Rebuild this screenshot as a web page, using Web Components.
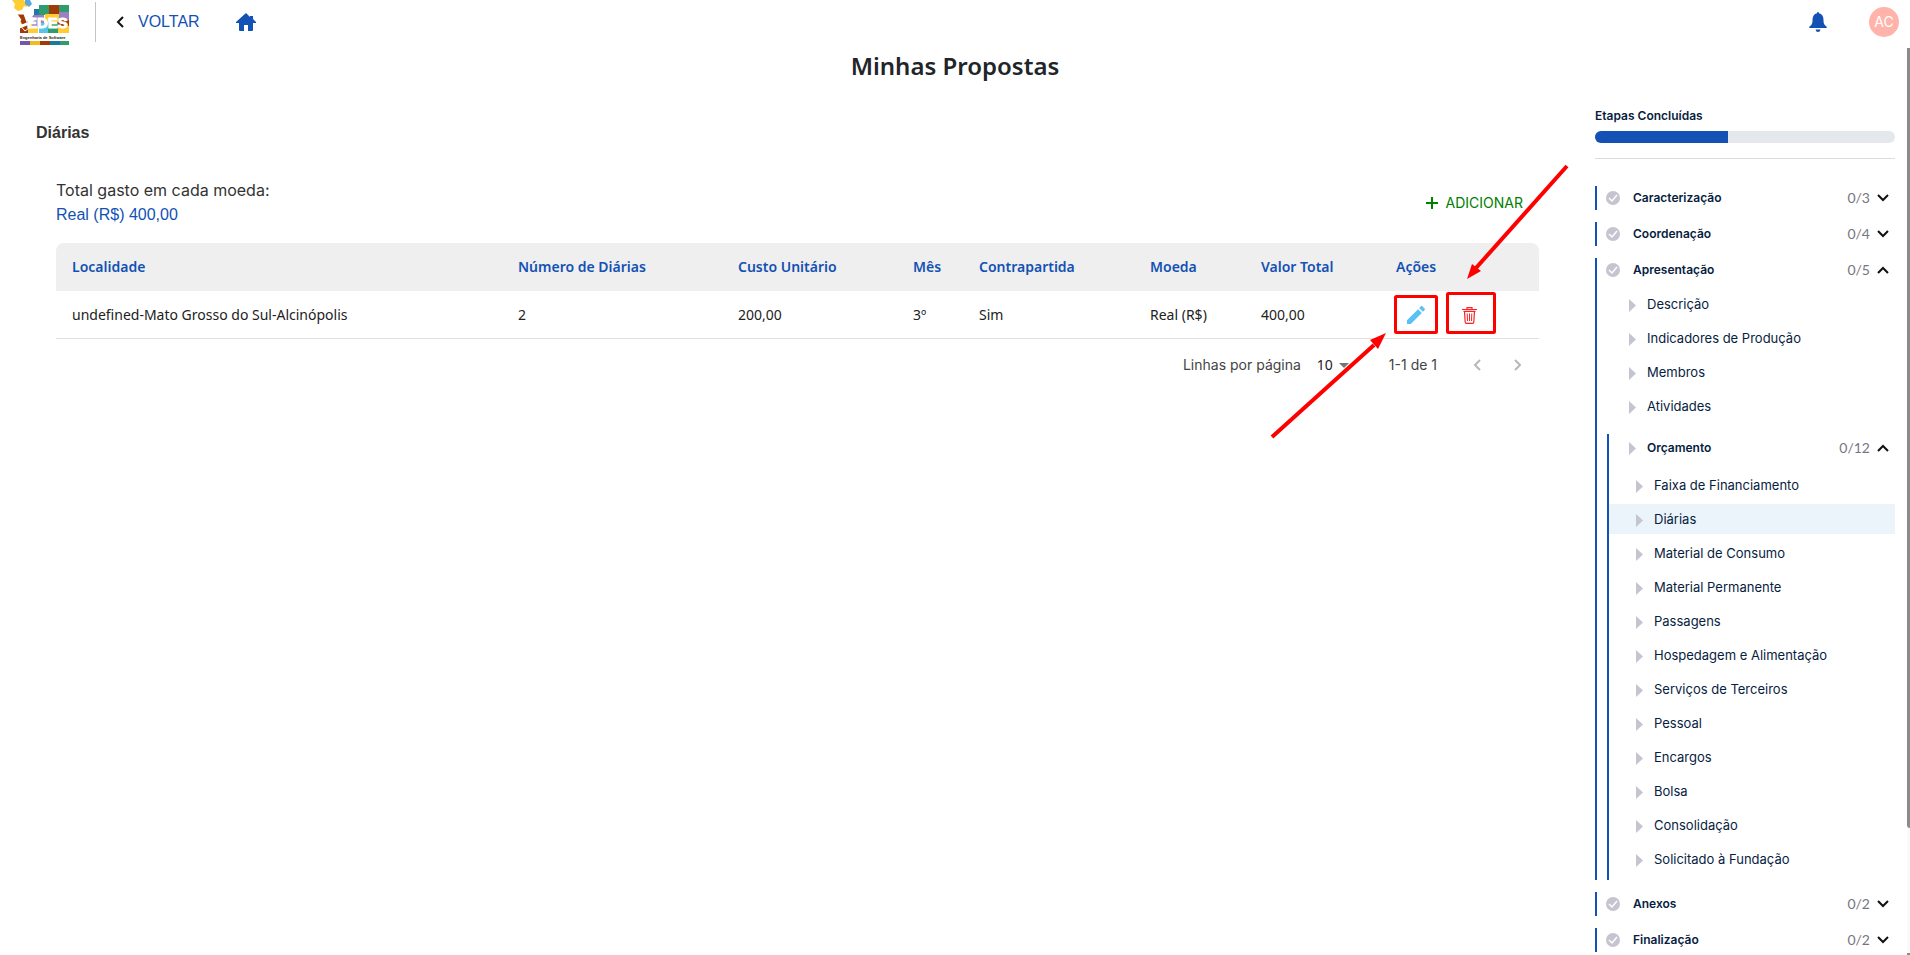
<!DOCTYPE html>
<html lang="pt-BR">
<head>
<meta charset="utf-8">
<meta name="viewport" content="width=device-width, initial-scale=1">
<title>Minhas Propostas</title>
<style>
  body { margin: 0; background: #fff; color: #212529; font-family: Inter, "Liberation Sans", sans-serif; font-size: 16px; line-height: 24px; }
</style>
</head>
<body>
<proposal-page>
  <app-header slot="header"></app-header>
  <expense-section slot="content" heading="Diárias">
    <expense-table></expense-table>
    <table-pager></table-pager>
    <guide-marks slot="overlay"></guide-marks>
  </expense-section>
  <steps-progress slot="steps"></steps-progress>
  <step-group slot="steps" label="Caracterização" count="0/3"></step-group>
  <step-group slot="steps" label="Coordenação" count="0/4"></step-group>
  <step-group slot="steps" label="Apresentação" count="0/5" open>
    <step-item>Descrição</step-item>
    <step-item>Indicadores de Produção</step-item>
    <step-item>Membros</step-item>
    <step-item>Atividades</step-item>
    <step-group label="Orçamento" count="0/12" open nested>
      <step-item deep>Faixa de Financiamento</step-item>
      <step-item deep current>Diárias</step-item>
      <step-item deep>Material de Consumo</step-item>
      <step-item deep>Material Permanente</step-item>
      <step-item deep>Passagens</step-item>
      <step-item deep>Hospedagem e Alimentação</step-item>
      <step-item deep>Serviços de Terceiros</step-item>
      <step-item deep>Pessoal</step-item>
      <step-item deep>Encargos</step-item>
      <step-item deep>Bolsa</step-item>
      <step-item deep>Consolidação</step-item>
      <step-item deep>Solicitado à Fundação</step-item>
    </step-group>
  </step-group>
  <step-group slot="steps" label="Anexos" count="0/2"></step-group>
  <step-group slot="steps" label="Finalização" count="0/2"></step-group>
</proposal-page>

<script>
const define = (name, render) => customElements.define(name, class extends HTMLElement {
  connectedCallback() {
    if (this.shadowRoot) return;
    const t = document.createElement('template');
    t.innerHTML = render(this);
    this.attachShadow({ mode: 'open' }).append(t.content.cloneNode(true));
  }
});

define('proposal-page', () => `
  <style>
    :host { display: block; position: relative; min-height: 100vh; }
    h1 { margin: 0; font: 600 24px/36px "Noto Sans", sans-serif; text-align: center; }
    .columns { display: grid; grid-template-columns: minmax(0, 1fr) 300px; padding-right: 15px; }
    aside { display: flex; flex-direction: column; gap: 12px; padding: 20px 0 3px; }
    .scroll { position: absolute; top: 48px; bottom: 0; right: 0; width: 3px; background: #fafafa; display: flex; flex-direction: column; justify-content: space-between; }
    .scroll::before { content: ""; height: 86%; background: #8b8b8b; border-bottom-left-radius: 3px; }
    .scroll::after { content: ""; height: 2px; background: #8b8b8b; }
  </style>
  <slot name="header"></slot>
  <h1>Minhas Propostas</h1>
  <div class="columns">
    <main><slot name="content"></slot></main>
    <aside aria-label="Etapas"><slot name="steps"></slot></aside>
  </div>
  <div class="scroll"></div>`);

define('ledes-logo', () => `
  <style>
    :host { display: block; width: 57px; height: 45px; }
    svg { display: block; }
    text { font-family: "Liberation Sans", sans-serif; font-weight: 700; }
    .word { font-size: 15px; fill: #fff; stroke: #fff; stroke-width: 1px; }
    .sub { font-size: 4px; fill: #222; }
  </style>
  <svg width="57" height="45" viewBox="0 0 57 45" role="img" aria-label="LEDES Engenharia de Software">
    <path fill="#fc3" d="M0 0h12l1 2 2 1v4l-3-1-2 4-4 1-4-3 1-4z"/>
    <path fill="#5aa7dc" d="M13 0h5l2 4-3 3-4-3z"/>
    <path fill="#2f9c6c" d="M27 5h10v10H27z"/><path fill="#a23a08" d="M37 5h10v10H37z"/><path fill="#2f9c6c" d="M47 5h10v9H47z"/>
    <path fill="#27a" d="M22 9h5v10h-5z"/><path fill="#9a80c0" d="M47 12h10v9H47z"/><path fill="#fc3" d="M33 14h14v8H33z"/>
    <path fill="#9b3a0c" d="M8 21h12v12H8z"/><path fill="#fc3" d="M16 21h10v12H16z"/><path fill="#9a80c0" d="M20 15h12v12H20z"/>
    <path fill="#58c4e4" d="M27 23h11v10H27z"/><path fill="#2f9c6c" d="M36 22h11v11H36z"/><path fill="#a23a08" d="M46 20h11v6H46z"/><path fill="#fc3" d="M46 26h11v7H46z"/>
    <path fill="#a23a08" stroke="#fff" d="M5 14l4 6-4 2 8 9 4-3-5-14z"/>
    <path fill="#fff" d="M11 9l4-2 1 4 4-2 2 5-2 3 4 2-6 5-4-5z"/>
    <text class="word" x="7" y="27" transform="rotate(-22 10 27)">L</text>
    <text class="word" x="15" y="28">EDES</text>
    <path fill="#fff" d="M8 33h49v8H8z"/>
    <text class="sub" x="8" y="39">Engenharia de Software</text>
    <path fill="#7558a5" d="M8 41h10v4H8z"/><path fill="#f5b921" d="M18 41h10v4H18z"/><path fill="#a23a08" d="M28 41h10v4H28z"/><path fill="#187a9c" d="M38 41h10v4H38z"/><path fill="#2f9c6c" d="M48 41h9v4h-9z"/>
  </svg>`);

define('app-header', () => `
  <style>
    :host { display: flex; align-items: center; justify-content: space-between; height: 44px; padding: 0 11px 4px 12px; }
    nav, .user { display: flex; align-items: center; }
    .divider { width: 1px; height: 40px; margin: 0 20px 0 26px; background: #c4c4c4; }
    a { color: #1351b4; text-decoration: none; display: flex; align-items: center; }
    .back { gap: 13px; font: 16px/24px "Liberation Sans", sans-serif; }
    .home { margin-left: 35px; }
    button { border: 0; padding: 0; background: none; display: flex; align-items: center; justify-content: center; }
    .user { gap: 42px; }
    .avatar { width: 30px; height: 30px; border-radius: 50%; background: #ffb3ab; color: #fff; font: 14px/30px Inter, sans-serif; }
  </style>
  <nav>
    <ledes-logo></ledes-logo><span class="divider"></span>
    <a class="back" href="#voltar"><svg width="9" height="12" viewBox="0 0 9 12" fill="none" stroke="#111" stroke-width="2"><path d="M7 1 2 6l5 5"/></svg>VOLTAR</a>
    <a class="home" href="#inicio" aria-label="Início"><svg width="22" height="20" viewBox="0 0 22 20" fill="#1351b4"><path d="M11 1 1 10v1h3v7q0 1 1 1h4v-6h4v6h4q1 0 1-1v-7h3v-1l-3-3V4h-3v1z"/></svg></a>
  </nav>
  <div class="user">
    <button aria-label="Notificações"><svg width="18" height="20" viewBox="0 0 18 20" fill="#1351b4"><path d="M9 0q1 0 1 1.300Q14.500 2.500 14.500 8c0 4 1 5 3 6.500.700.800.500 1.500-.500 1.500H1C0 16-.200 15.300.500 14.500 2.500 13 3.500 12 3.500 8Q3.500 2.500 8 1.300 8 0 9 0zM6.500 17.500h5Q11 20 9 20t-2.500-2.500z"/></svg></button>
    <button class="avatar">AC</button>
  </div>`);

define('expense-section', el => `
  <style>
    :host { display: block; padding: 37px 56px 0; }
    h2 { margin: 0 0 33px -20px; font: 700 16px/24px "Liberation Sans", sans-serif; color: #333; }
    .body { position: relative; }
    .top { display: flex; justify-content: space-between; align-items: center; margin-bottom: 16px; }
    .sum { display: grid; gap: 1px; }
    p { margin: 0; color: #333; }
    p.money { font-family: "Liberation Sans", sans-serif; color: #1351b4; }
    button { display: flex; align-items: center; gap: 8px; border: 0; background: none; padding: 0 16px; font: 14px/24px Inter, sans-serif; color: #008000; }
  </style>
  <h2>${el.getAttribute('heading')}</h2>
  <div class="body">
    <div class="top">
      <div class="sum"><p>Total gasto em cada moeda:</p><p class="money">Real (R$) 400,00</p></div>
      <button><svg width="12" height="12" viewBox="0 0 12 12" stroke="#008000" stroke-width="2"><path d="M6 0v12M0 6h12"/></svg>ADICIONAR</button>
    </div>
    <slot></slot>
    <slot name="overlay"></slot>
  </div>`);

define('expense-table', () => `
  <style>
    :host { display: block; }
    table { width: 100%; table-layout: fixed; border-collapse: separate; border-spacing: 0; font: 14px/24px "Noto Sans", sans-serif; color: #222; }
    th, td { height: 24px; padding: 12px 16px; text-align: left; white-space: nowrap; }
    th { background: #efefef; color: #1351b4; font-weight: 600; }
    th:first-child { border-top-left-radius: 8px; }
    th:last-child { border-top-right-radius: 8px; }
    td { padding-bottom: 11px; border-bottom: 1px solid #e0e0e0; }
    .num { width: 188px; } .cost { width: 143px; } .month { width: 34px; } .match { width: 139px; }
    .coin { width: 79px; } .total { width: 103px; } .act { width: 127px; }
    .actions { display: flex; gap: 33px; padding-left: 10px; }
    button { border: 0; padding: 0; background: none; width: 20px; height: 24px; display: flex; align-items: center; justify-content: center; }
  </style>
  <table>
    <thead><tr><th>Localidade</th><th class="num">Número de Diárias</th><th class="cost">Custo Unitário</th><th class="month">Mês</th><th class="match">Contrapartida</th><th class="coin">Moeda</th><th class="total">Valor Total</th><th class="act">Ações</th></tr></thead>
    <tbody><tr><td>undefined-Mato Grosso do Sul-Alcinópolis</td><td>2</td><td>200,00</td><td>3º</td><td>Sim</td><td>Real (R$)</td><td>400,00</td>
      <td><div class="actions">
        <button aria-label="Editar"><svg width="18" height="18" viewBox="3 3 18 18" fill="#5bc0f5"><path d="M3 17.250V21h3.750L17.810 9.940l-3.750-3.750zM20.710 7.040c.390-.390.390-1.020 0-1.410l-2.340-2.340c-.390-.390-1.020-.390-1.410 0l-1.830 1.830 3.750 3.750z"/></svg></button>
        <button aria-label="Excluir"><svg width="15" height="17" viewBox="0 0 15 17" fill="none" stroke="#f22" stroke-width="1.200"><path d="M0 2.500h15M5 2V.700h5V2M1.500 4.300h12M2.500 4.500l.700 10.500q0 1.300 1.300 1.300h6q1.300 0 1.300-1.300l.700-10.500"/><path stroke-width="1" d="M5.200 6.500l.300 7.500M7.500 6.500V14M9.800 6.500 9.500 14"/></svg></button>
      </div></td></tr></tbody>
  </table>`);

define('table-pager', () => `
  <style>
    :host { display: flex; align-items: center; justify-content: flex-end; height: 52px; padding-right: 2px; font-size: 14px; line-height: 20px; color: #444; }
    label { display: flex; align-items: center; gap: 16px; }
    .pick { display: grid; align-items: center; width: 36px; margin-right: 36px; }
    select, .pick svg { grid-area: 1 / 1; }
    select { appearance: none; border: 0; padding: 0; background: none; font: 14px/20px "Noto Sans", sans-serif; color: #222; }
    .pick svg { justify-self: end; pointer-events: none; margin-right: 4px; }
    .range { margin-right: 20px; }
    button { width: 40px; height: 40px; padding: 0; border: 0; background: none; display: flex; align-items: center; justify-content: center; }
  </style>
  <label>Linhas por página
    <span class="pick"><select><option>10</option></select><svg width="10" height="5" viewBox="0 0 10 5" fill="#757575"><path d="M0 0h10L5 5z"/></svg></span>
  </label>
  <span class="range">1-1 de 1</span>
  <button aria-label="Página anterior" disabled><svg width="8" height="12" viewBox="0 0 8 12" fill="none" stroke="#b8b8b8" stroke-width="2"><path d="M7 1 2 6l5 5"/></svg></button>
  <button aria-label="Próxima página" disabled><svg width="8" height="12" viewBox="0 0 8 12" fill="none" stroke="#b8b8b8" stroke-width="2"><path d="m2 1 5 5-5 5"/></svg></button>`);

/* Red frames and arrows that point at the row's edit and delete actions. */
define('guide-marks', () => `
  <style>
    :host { position: absolute; right: -40px; top: -28px; width: 320px; height: 300px; pointer-events: none; }
    svg { display: block; }
  </style>
  <svg width="320" height="300" viewBox="1259 150 320 300" fill="none" stroke="#f00" stroke-width="3" aria-hidden="true">
    <rect x="1395.500" y="296.500" width="41" height="36" rx="1"/>
    <rect x="1447.500" y="293.500" width="47" height="39" rx="1"/>
    <path d="M1567 166 1476 268M1272 437l102-92" stroke-width="4"/>
    <path fill="#f00" stroke="none" d="M1467 279l5-15 9 7zM1386 333l-8 16-8-9z"/>
  </svg>`);

define('steps-progress', () => `
  <style>
    :host { display: block; padding-bottom: 15px; border-bottom: 1px solid #dcdcdc; margin-bottom: 15px; }
    h3 { margin: 0 0 3px; font-weight: 600; font-size: 12px; line-height: 24px; color: #071d41; }
    .bar { height: 12px; border-radius: 6px; overflow: hidden; background: #e4e7eb; }
    .bar div { width: 133px; height: 100%; background: #1351b4; }
  </style>
  <h3>Etapas Concluídas</h3>
  <div class="bar" role="progressbar" aria-label="Etapas Concluídas" aria-valuenow="44" aria-valuemin="0" aria-valuemax="100"><div></div></div>`);

const triangle = '<svg width="7" height="13" viewBox="0 0 7 13" fill="#c5c4d0"><path d="M0 0v13l7-6.500z"/></svg>';
const check = '<svg width="14" height="14" viewBox="0 0 14 14"><circle cx="7" cy="7" r="7" fill="#c5c4d0"/><path d="m3 7 3 3 5-6" fill="none" stroke="#fff" stroke-width="1.500"/></svg>';

define('step-group', el => {
  const open = el.hasAttribute('open'), nested = el.hasAttribute('nested');
  return `
  <style>
    :host { display: block; border-left: 2px solid #1351b4; }
    :host([nested]) { margin: 13px 0 0 10px; }
    button { box-sizing: border-box; width: 100%; height: 24px; display: flex; align-items: center; border: 0; background: none; padding: 0 6px 0 9px; font: 600 12px/24px Inter, sans-serif; color: #071d41; }
    :host([nested]) button { height: 28px; padding-left: 20px; }
    .mark { display: flex; width: 27px; }
    :host([nested]) .mark { width: 18px; }
    .count { margin-left: auto; font: 14px/24px Lato, sans-serif; color: #757780; }
    .chev { margin-left: 7px; }
    .items { padding-top: 7px; }
    :host([nested]) .items { display: flow-root; padding: 8px 0 2px; }
  </style>
  <button aria-expanded="${open}">
    <span class="mark">${nested ? triangle : check}</span>${el.getAttribute('label')}
    <span class="count">${el.getAttribute('count')}</span>
    <svg class="chev" width="12" height="8" viewBox="0 0 12 8" fill="none" stroke="#111" stroke-width="2"><path d="${open ? 'm1 7 5-5 5 5' : 'm1 1 5 5 5-5'}"/></svg>
  </button>
  ${open ? '<div class="items"><slot></slot></div>' : ''}`;
});

define('step-item', () => `
  <style>
    :host { display: block; padding-left: 32px; margin-bottom: 4px; }
    :host([deep]) { padding-left: 27px; }
    :host([current]) { background: #ebf3fb; }
    a { display: flex; align-items: center; gap: 11px; font-size: 13px; line-height: 30px; color: #071d41; text-decoration: none; }
    svg { margin-top: 2px; }
  </style>
  <a href="#etapa">${triangle}<span><slot></slot></span></a>`);
</script>
</body>
</html>
